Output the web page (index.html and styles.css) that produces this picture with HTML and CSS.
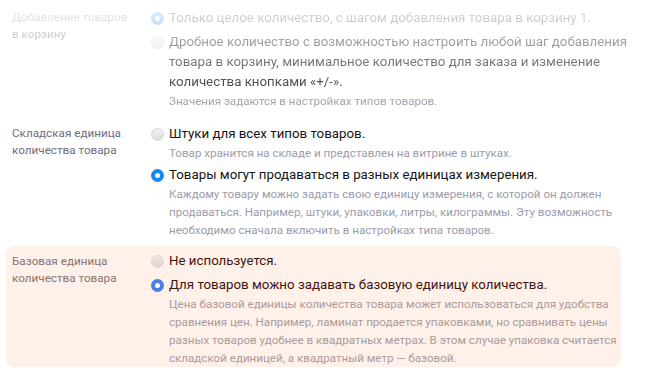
FILE: index.html
```html
<!DOCTYPE html>
<html lang="ru">
<head>
    <meta charset="UTF-8">
    <title>Настройки количества товара</title>
    <link rel="stylesheet" href="styles.css">
</head>
<body>
    <div class="settings">
        <div class="row row-faded">
            <div class="label">Добавление товаров<br>в корзину</div>
            <div class="options">
                <div class="option">
                    <span class="radio checked"></span>
                    <span class="option-text">Только целое количество, с шагом добавления товара в корзину 1.</span>
                </div>
                <div class="option">
                    <span class="radio"></span>
                    <span class="option-text">Дробное количество с возможностью настроить любой шаг добавления товара в корзину, минимальное количество для заказа и изменение количества кнопками «+/-».</span>
                </div>
                <div class="hint">Значения задаются в настройках типов товаров.</div>
            </div>
        </div>

        <div class="row">
            <div class="label">Складская единица<br>количества товара</div>
            <div class="options">
                <div class="option">
                    <span class="radio"></span>
                    <span class="option-text">Штуки для всех типов товаров.</span>
                </div>
                <div class="hint">Товар хранится на складе и представлен на витрине в штуках.</div>
                <div class="option">
                    <span class="radio checked"></span>
                    <span class="option-text">Товары могут продаваться в разных единицах измерения.</span>
                </div>
                <div class="hint">Каждому товару можно задать свою единицу измерения, с которой он должен продаваться. Например, штуки, упаковки, литры, килограммы. Эту возможность необходимо сначала включить в настройках типа товаров.</div>
            </div>
        </div>

        <div class="row row-highlight">
            <div class="label">Базовая единица<br>количества товара</div>
            <div class="options">
                <div class="option">
                    <span class="radio"></span>
                    <span class="option-text">Не используется.</span>
                </div>
                <div class="option">
                    <span class="radio checked"></span>
                    <span class="option-text">Для товаров можно задавать базовую единицу количества.</span>
                </div>
                <div class="hint">Цена базовой единицы количества товара может использоваться для удобства сравнения цен. Например, ламинат продается упаковками, но сравнивать цены разных товаров удобнее в квадратных метрах. В этом случае упаковка считается складской единицей, а квадратный метр — базовой.</div>
            </div>
        </div>
    </div>
</body>
</html>
```

FILE: styles.css
```css
body {
    margin: 0;
    background: #fff;
    font-family: Roboto, "Noto Sans", sans-serif;
    color: #151515;
}
.settings {
    width: 640px;
    padding: 8px 0 0 6px;
    display: flex;
    flex-direction: column;
}
.row {
    display: grid;
    grid-template-columns: 139px 1fr;
    padding: 0 6px;
}
.row + .row {
    margin-top: 14px;
}
.row-faded {
    -webkit-mask-image: linear-gradient(rgba(0, 0, 0, 0.12), rgba(0, 0, 0, 0.95) 95%);
    mask-image: linear-gradient(rgba(0, 0, 0, 0.12), rgba(0, 0, 0, 0.95) 95%);
}
.label {
    font-size: 11.7px;
    line-height: 17px;
    color: #6e6e7c;
    padding-top: 1px;
}
.options {
    display: flex;
    flex-direction: column;
}
.option {
    display: flex;
    align-items: flex-start;
    gap: 5px;
    font-size: 13.3px;
    line-height: 20px;
}
.option + .option {
    margin-top: 4px;
}
.hint + .option {
    margin-top: 3px;
}
.radio {
    flex: none;
    width: 13px;
    height: 13px;
    margin-top: 4px;
    box-sizing: border-box;
    border-radius: 50%;
    border: 1px solid #d6d6dc;
    background: linear-gradient(#f2f2f4, #dcdce0);
}
.radio.checked {
    border: 4px solid #1a86f2;
    background: #fff;
}
.hint {
    padding-left: 18px;
    font-size: 11.6px;
    line-height: 18px;
    color: #9c9caa;
}

.row + .row-highlight {
    margin-top: 7px;
}
.row-highlight {
    margin-right: 25px;
    padding: 5px 0 0 6px;
    background: #fdf1ea;
    border-radius: 8px;
}
.row-highlight .label {
    color: #8a7472;
    padding-top: 2px;
}
.row-highlight .option {
    color: #47140b;
}
.row-highlight .radio {
    border-color: #e0d4d0;
    background: linear-gradient(#f0e8e6, #dcd2d0);
}
.row-highlight .radio.checked {
    border-color: #4a7fe0;
    background: #fff;
}
.row-highlight .hint {
    color: #ad9a9c;
}
```
